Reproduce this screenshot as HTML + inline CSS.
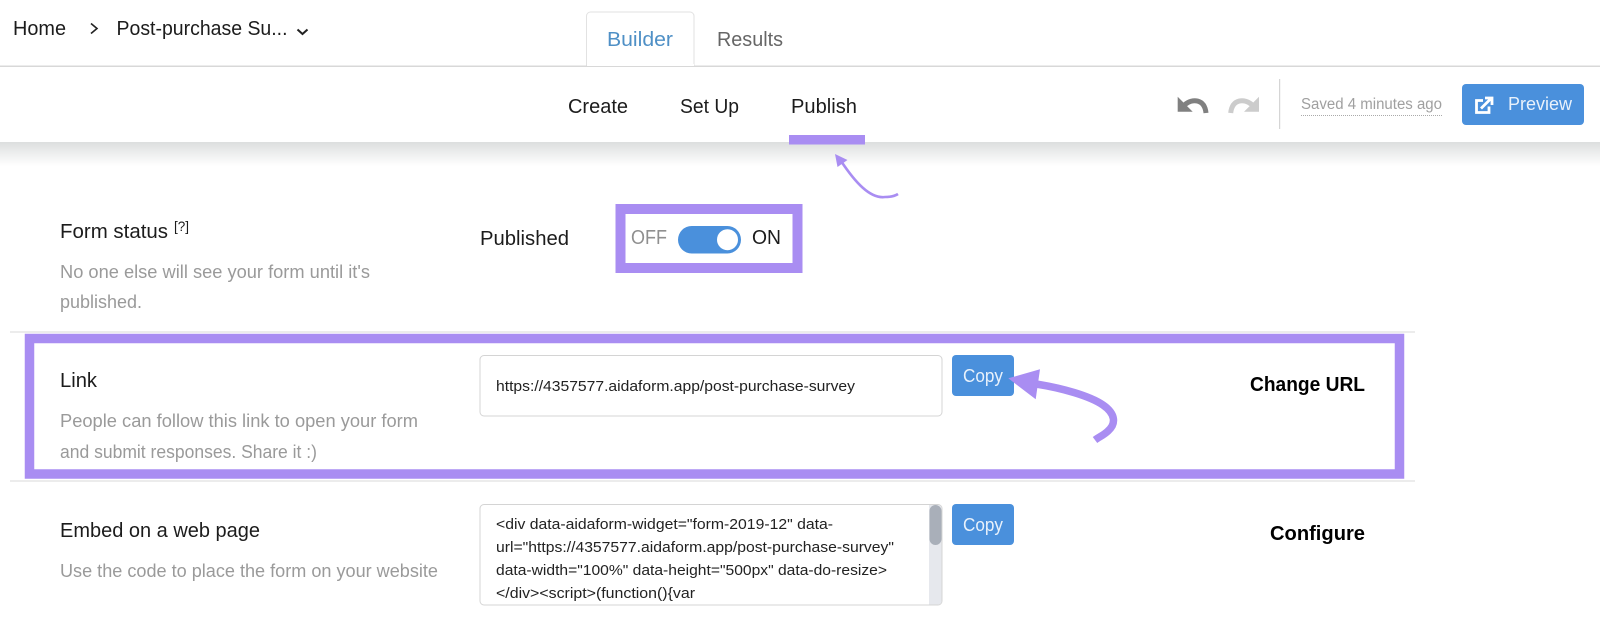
<!DOCTYPE html>
<html>
<head>
<meta charset="utf-8">
<style>
html,body{margin:0;padding:0;background:#fff;width:1600px;height:627px;overflow:hidden}
svg{display:block}
text{font-family:"Liberation Sans",sans-serif;fill:#1c1c1c}
.g{fill:#9a9a9a;font-size:18px}
.m{font-size:20px}
.c{font-size:15px;fill:#222}
</style>
</head>
<body>
<svg width="1600" height="627" viewBox="0 0 1600 627" xmlns="http://www.w3.org/2000/svg">
<defs>
<linearGradient id="sh" x1="0" y1="0" x2="0" y2="1">
<stop offset="0" stop-color="#dcdede"/>
<stop offset="0.5" stop-color="#eeefef"/>
<stop offset="1" stop-color="#fff"/>
</linearGradient>
</defs>
<rect width="1600" height="627" fill="#fff"/>

<!-- top bar -->
<text class="m" x="13" y="35" textLength="53" lengthAdjust="spacingAndGlyphs">Home</text>
<path d="M91 23.5L97 28.5L91 33.5" fill="none" stroke="#222" stroke-width="1.6"/>
<text class="m" x="116.500" y="35" textLength="171" lengthAdjust="spacingAndGlyphs">Post-purchase Su...</text>
<path d="M297.5 29.5L302.5 34L307.5 29.5" fill="none" stroke="#222" stroke-width="2"/>

<path d="M586.5 66V16a4 4 0 0 1 4-4H690a4 4 0 0 1 4 4V66" fill="#fff" stroke="#e2e2e2" stroke-width="1"/>
<rect x="0" y="65.500" width="1600" height="1.500" fill="#d8d8d8"/>
<rect x="587" y="64" width="107" height="2" fill="#fff"/>
<text class="m" x="607" y="46" textLength="66" lengthAdjust="spacingAndGlyphs" style="fill:#4f90c6">Builder</text>
<text class="m" x="717" y="46" textLength="66" lengthAdjust="spacingAndGlyphs" style="fill:#666">Results</text>

<!-- sub header -->
<rect x="0" y="142" width="1600" height="24" fill="url(#sh)"/>
<text class="m" x="568" y="113" textLength="60" lengthAdjust="spacingAndGlyphs">Create</text>
<text class="m" x="680" y="113" textLength="59" lengthAdjust="spacingAndGlyphs">Set Up</text>
<text class="m" x="791" y="113" textLength="66" lengthAdjust="spacingAndGlyphs">Publish</text>
<rect x="789" y="135" width="76" height="9.500" fill="#a98df2"/>

<!-- small arrow -->
<path d="M841 161C855 182 870 199 885 197C890 197 895 196 898 194" fill="none" stroke="#a98df2" stroke-width="2.600"/>
<path d="M835 154L847.500 160L837.500 167Z" fill="#a98df2"/>

<!-- undo / redo -->
<path d="M1177.700 96.700V111.700H1192.700Z" fill="#808080"/>
<path d="M1185 104.500C1192 98.500 1204.500 98.500 1206 113" fill="none" stroke="#808080" stroke-width="5"/>
<path d="M1259 96.700V111.700H1244Z" fill="#cccccc"/>
<path d="M1251.700 104.500C1244.700 98.500 1232.200 98.500 1230.700 113" fill="none" stroke="#cccccc" stroke-width="5"/>
<rect x="1279" y="79" width="1.200" height="50" fill="#d5d5d5"/>
<text x="1301" y="109" textLength="141" lengthAdjust="spacingAndGlyphs" style="font-size:15.500px;fill:#a0a0a0">Saved 4 minutes ago</text>
<line x1="1301" y1="115.500" x2="1442" y2="115.500" stroke="#aaa" stroke-width="1" stroke-dasharray="1 1"/>
<rect x="1462" y="84" width="122" height="41" rx="4" fill="#4a90dc"/>
<path d="M1483 100.500H1476.500V112.500H1489V106.500" fill="none" stroke="#fff" stroke-width="2.800"/>
<path d="M1481 108.500L1491 98.500M1485 98H1492V105" fill="none" stroke="#fff" stroke-width="2.800"/>
<text x="1508" y="110" textLength="64" lengthAdjust="spacingAndGlyphs" style="font-size:18.500px;fill:#e8f1fb">Preview</text>

<!-- form status -->
<text class="m" x="60" y="238" textLength="108" lengthAdjust="spacingAndGlyphs">Form status</text>
<text x="174" y="231" textLength="15" lengthAdjust="spacingAndGlyphs" style="font-size:14px">[?]</text>
<text class="g" x="60" y="278" textLength="310" lengthAdjust="spacingAndGlyphs">No one else will see your form until it's</text>
<text class="g" x="60" y="308" textLength="82" lengthAdjust="spacingAndGlyphs">published.</text>
<text class="m" x="480" y="245" textLength="89" lengthAdjust="spacingAndGlyphs">Published</text>

<rect x="620.500" y="209" width="177" height="59" fill="none" stroke="#a98df2" stroke-width="10"/>
<text x="631" y="244" textLength="36" lengthAdjust="spacingAndGlyphs" style="font-size:20px;fill:#8f8f8f">OFF</text>
<rect x="678" y="226" width="63" height="27.500" rx="13.750" fill="#4a90dc"/>
<circle cx="727.500" cy="239.700" r="10.500" fill="#fff"/>
<text x="752" y="244" textLength="29" lengthAdjust="spacingAndGlyphs" style="font-size:20px">ON</text>

<!-- dividers -->
<rect x="10" y="331.500" width="1405" height="1" fill="#d9d9d9"/>
<rect x="10" y="480.500" width="1405" height="1" fill="#d9d9d9"/>

<!-- link highlight -->
<rect x="29.500" y="338.500" width="1370" height="135.500" fill="none" stroke="#a98df2" stroke-width="9.500"/>
<text class="m" x="60" y="387" textLength="37" lengthAdjust="spacingAndGlyphs">Link</text>
<text class="g" x="60" y="427" textLength="358" lengthAdjust="spacingAndGlyphs">People can follow this link to open your form</text>
<text class="g" x="60" y="458" textLength="257" lengthAdjust="spacingAndGlyphs">and submit responses. Share it :)</text>
<rect x="480" y="355.500" width="462" height="60.500" rx="4" fill="#fff" stroke="#d4d4d4" stroke-width="1"/>
<text class="c" x="496" y="391" textLength="359" lengthAdjust="spacingAndGlyphs">https://4357577.aidaform.app/post-purchase-survey</text>
<rect x="952" y="355" width="62" height="41" rx="4" fill="#4a90dc"/>
<text x="963" y="382" textLength="40" lengthAdjust="spacingAndGlyphs" style="font-size:18px;fill:#e8f1fb">Copy</text>
<text x="1250" y="391" textLength="115" lengthAdjust="spacingAndGlyphs" style="font-size:20px;font-weight:bold;fill:#000">Change URL</text>

<!-- big arrow -->
<path d="M1036 384C1062 388 1090 396 1103 405C1116 414 1116 424 1108 431C1104 435 1099 437 1095 440" fill="none" stroke="#a98df2" stroke-width="7.500"/>
<path d="M1008.300 378.300L1040 369.300L1035.700 399.300Z" fill="#a98df2"/>

<!-- embed -->
<text class="m" x="60" y="537" textLength="200" lengthAdjust="spacingAndGlyphs">Embed on a web page</text>
<text class="g" x="60" y="577" textLength="378" lengthAdjust="spacingAndGlyphs">Use the code to place the form on your website</text>
<rect x="480" y="504.500" width="462" height="100.500" rx="4" fill="#fff" stroke="#d4d4d4" stroke-width="1"/>
<path d="M929 505H938a3.500 3.500 0 0 1 3.500 3.500V601a3.500 3.500 0 0 1-3.500 3.500H929Z" fill="#e6e8ed"/>
<rect x="929.500" y="505" width="12" height="40" rx="6" fill="#a9afb9"/>
<text class="c" x="496" y="529" textLength="337" lengthAdjust="spacingAndGlyphs">&lt;div data-aidaform-widget="form-2019-12" data-</text>
<text class="c" x="496" y="552" textLength="398" lengthAdjust="spacingAndGlyphs">url="https://4357577.aidaform.app/post-purchase-survey"</text>
<text class="c" x="496" y="575" textLength="391" lengthAdjust="spacingAndGlyphs">data-width="100%" data-height="500px" data-do-resize&gt;</text>
<text class="c" x="496" y="598" textLength="199" lengthAdjust="spacingAndGlyphs">&lt;/div&gt;&lt;script&gt;(function(){var</text>
<rect x="952" y="504" width="62" height="41" rx="4" fill="#4a90dc"/>
<text x="963" y="531" textLength="40" lengthAdjust="spacingAndGlyphs" style="font-size:18px;fill:#e8f1fb">Copy</text>
<text x="1270" y="540" textLength="95" lengthAdjust="spacingAndGlyphs" style="font-size:20px;font-weight:bold;fill:#000">Configure</text>
</svg>
</body>
</html>
